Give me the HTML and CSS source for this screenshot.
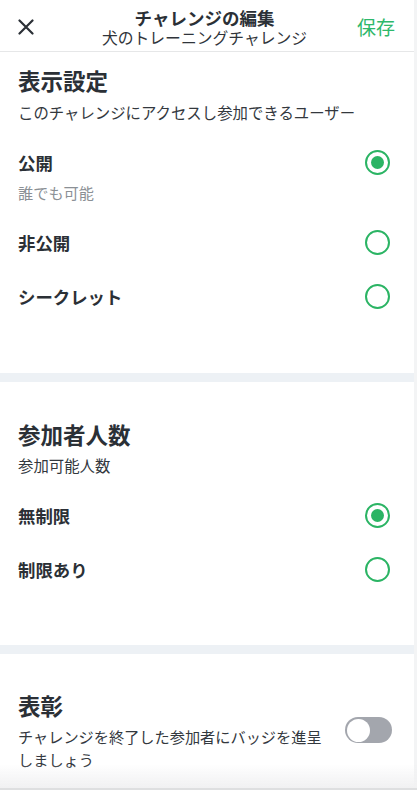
FILE: index.html
```html
<!DOCTYPE html>
<html lang="ja">
<head>
<meta charset="utf-8">
<title>チャレンジの編集</title>
<link rel="stylesheet" href="styles.css">
</head>
<body>
<div class="page">
  <header class="topbar">
    <button class="close" aria-label="閉じる">
      <svg width="16" height="16" viewBox="0 0 16 16"><path d="M1.5 1.5 L14.5 14.5 M14.5 1.5 L1.5 14.5" stroke="#2b3036" stroke-width="2.2" stroke-linecap="round" fill="none"/></svg>
    </button>
    <div class="titles">
      <div class="title">チャレンジの編集</div>
      <div class="subtitle">犬のトレーニングチャレンジ</div>
    </div>
    <div class="save">保存</div>
  </header>

  <section class="section s1">
    <h2 class="sec-title">表示設定</h2>
    <p class="sec-sub">このチャレンジにアクセスし参加できるユーザー</p>
    <div class="option first">
      <div class="opt-text">
        <div class="opt-label">公開</div>
        <div class="opt-desc">誰でも可能</div>
      </div>
      <span class="radio on"></span>
    </div>
    <div class="option">
      <div class="opt-text"><div class="opt-label">非公開</div></div>
      <span class="radio"></span>
    </div>
    <div class="option">
      <div class="opt-text"><div class="opt-label">シークレット</div></div>
      <span class="radio"></span>
    </div>
  </section>
  <div class="band"></div>

  <section class="section s2">
    <h2 class="sec-title">参加者人数</h2>
    <p class="sec-sub">参加可能人数</p>
    <div class="option">
      <div class="opt-text"><div class="opt-label">無制限</div></div>
      <span class="radio on"></span>
    </div>
    <div class="option">
      <div class="opt-text"><div class="opt-label">制限あり</div></div>
      <span class="radio"></span>
    </div>
  </section>
  <div class="band"></div>

  <section class="section s3">
    <h2 class="sec-title">表彰</h2>
    <div class="award-row">
      <p class="award-desc">チャレンジを終了した参加者にバッジを進呈しましょう</p>
      <span class="toggle"><span class="knob"></span></span>
    </div>
  </section>
</div>
<div class="bottom-fade"></div>
</body>
</html>
```
FILE: styles.css
```css
* { box-sizing: border-box; }
html, body { margin: 0; padding: 0; }
body {
  background: #f3f4f5;
  font-family: "Noto Sans CJK JP", "Noto Sans", sans-serif;
  color: #2b3036;
  width: 417px;
  height: 790px;
  overflow: hidden;
}
.page {
  width: 414px;
  min-height: 790px;
  background: #fff;
}
.topbar {
  height: 52px;
  border-bottom: 1px solid #e6e7e8;
  display: grid;
  grid-template-columns: 1fr auto 1fr;
  align-items: start;
  padding: 0 19px 0 18px;
}
.close {
  justify-self: start;
  border: 0;
  background: none;
  padding: 0;
  margin-top: 19px;
  width: 16px;
  height: 16px;
  display: block;
}
.close svg { display: block; }
.titles {
  text-align: center;
  padding-top: 7px;
  margin-left: -4px;
}
.title {
  font-size: 17.5px;
  font-weight: 700;
  line-height: 21px;
  height: 21px;
  color: #2b3036;
}
.subtitle {
  font-size: 15.8px;
  line-height: 20px;
  color: #2f343a;
}
.save {
  justify-self: end;
  font-size: 19px;
  line-height: 24px;
  color: #2eb86a;
  margin-top: 15px;
}
.section {
  padding: 0 24px 0 18px;
}
.s1 { padding-top: 14px; padding-bottom: 49px; }
.s2 { padding-top: 38px; padding-bottom: 48px; }
.s3 { padding-top: 37px; padding-bottom: 40px; }
.sec-title {
  margin: 0;
  font-size: 22.5px;
  line-height: 28px;
  font-weight: 700;
  color: #2b3036;
}
.sec-sub {
  margin: 8px 0 14px;
  font-size: 15.4px;
  line-height: 20px;
  color: #33383e;
}
.s2 .sec-sub { margin-top: 7px; margin-bottom: 14px; }
.option {
  display: flex;
  align-items: flex-start;
  justify-content: space-between;
  padding: 16px 0;
}
.option.first { padding-bottom: 14px; }
.opt-label {
  font-size: 17.4px;
  line-height: 22px;
  font-weight: 700;
  color: #2b3036;
}
.opt-desc {
  margin-top: 8px;
  font-size: 15.2px;
  line-height: 20px;
  color: #8b9095;
}
.radio {
  width: 25px;
  height: 25px;
  border: 2.2px solid #2bb464;
  border-radius: 50%;
  margin: -2px 0 -1px;
  flex: none;
  position: relative;
}
.radio.on::after {
  content: "";
  position: absolute;
  left: 3.5px;
  top: 3.5px;
  width: 13.5px;
  height: 13.5px;
  border-radius: 50%;
  background: #2bb464;
}
.band {
  height: 9px;
  background: #edf1f5;
}
.award-row {
  display: flex;
  align-items: flex-start;
  justify-content: space-between;
  margin-top: 6px;
}
.award-desc {
  margin: 0;
  width: 312px;
  font-size: 15.2px;
  line-height: 23px;
  color: #33383e;
}
.toggle {
  width: 47px;
  height: 26px;
  border-radius: 13px;
  background: #a3a6ad;
  margin-top: -8px;
  margin-right: -2px;
  position: relative;
  flex: none;
}
.knob {
  position: absolute;
  left: 1.5px;
  top: 1.5px;
  width: 23px;
  height: 23px;
  border-radius: 50%;
  background: #fff;
}
.bottom-fade {
  position: fixed;
  left: 0;
  right: 0;
  bottom: 0;
  height: 26px;
  background: linear-gradient(to bottom, rgba(255,255,255,0), #f1f1f2 92%, #dedfe0 92%);
}
```
